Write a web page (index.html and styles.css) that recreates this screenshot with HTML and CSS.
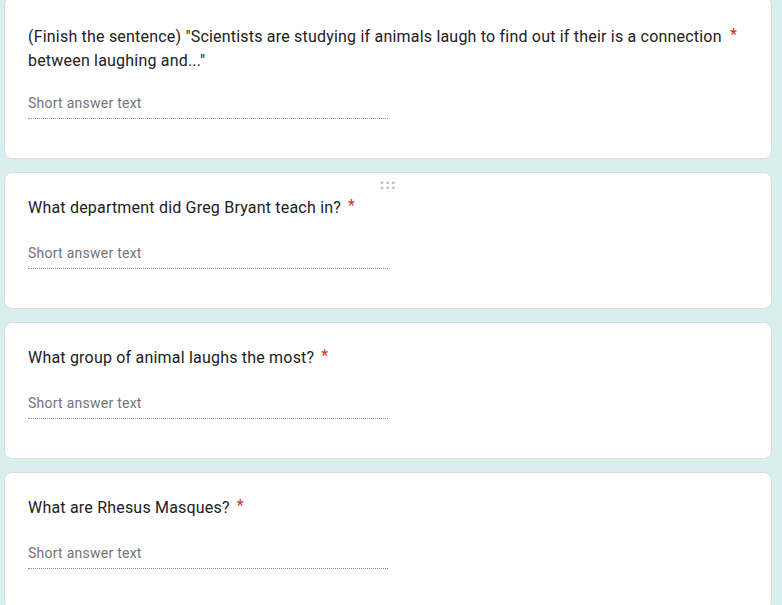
FILE: index.html
```html
<!DOCTYPE html>
<html lang="en">
<head>
<meta charset="utf-8">
<title>Form questions</title>
<link rel="stylesheet" href="styles.css">
</head>
<body>
<main class="form">
  <section class="card first">
    <div class="q-head">
      <div class="q-title">(Finish the sentence) "Scientists are studying if animals laugh to find out if their is a connection between laughing and..."</div>
      <span class="req">*</span>
    </div>
    <div class="answer"><span class="placeholder">Short answer text</span></div>
  </section>

  <section class="card">
    <svg class="drag" width="16" height="9" viewBox="0 0 16 9" aria-hidden="true">
      <circle cx="2" cy="1.8" r="1.4"/><circle cx="7.7" cy="1.8" r="1.4"/><circle cx="13.4" cy="1.8" r="1.4"/>
      <circle cx="2" cy="6.8" r="1.4"/><circle cx="7.7" cy="6.8" r="1.4"/><circle cx="13.4" cy="6.8" r="1.4"/>
    </svg>
    <div class="q-head">
      <div class="q-title">What department did Greg Bryant teach in?</div>
      <span class="req">*</span>
    </div>
    <div class="answer"><span class="placeholder">Short answer text</span></div>
  </section>

  <section class="card">
    <div class="q-head">
      <div class="q-title">What group of animal laughs the most?</div>
      <span class="req">*</span>
    </div>
    <div class="answer"><span class="placeholder">Short answer text</span></div>
  </section>

  <section class="card">
    <div class="q-head">
      <div class="q-title">What are Rhesus Masques?</div>
      <span class="req">*</span>
    </div>
    <div class="answer"><span class="placeholder">Short answer text</span></div>
  </section>
</main>
</body>
</html>
```

FILE: styles.css
```css
html, body {
  margin: 0;
  padding: 0;
}

body {
  background: #d9efed;
  font-family: Roboto, "Liberation Sans", Arial, sans-serif;
  overflow: hidden;
}

.form {
  display: flex;
  flex-direction: column;
  gap: 13px;
  padding: 0 10px 0 4px;
}

.card {
  position: relative;
  background: #fff;
  border: 1px solid #dadce0;
  border-radius: 8px;
  padding: 23px 23px 39px 23px;
}

.card.first {
  margin-top: -3px;
  padding-top: 27px;
}

.card.first .answer {
  margin-top: 20px;
}

.drag {
  position: absolute;
  top: 8px;
  left: 50%;
  transform: translateX(-50%);
  fill: #bdbdbd;
}

.q-head {
  display: flex;
  align-items: flex-start;
  margin-right: 11px;
}

.q-title {
  flex: 0 1 auto;
  font-size: 16px;
  line-height: 24px;
  color: #202124;
  letter-spacing: 0.2px;
}

.req {
  flex: none;
  margin-top: -2px;
  padding-left: 7px;
  font-size: 16px;
  line-height: 24px;
  color: #d93025;
}

.answer {
  margin-top: 23px;
  width: 360px;
  padding-bottom: 5px;
  border-bottom: 1px dotted #8a8d91;
}

.placeholder {
  display: block;
  font-family: Roboto, "Liberation Sans", Arial, sans-serif;
  font-size: 14px;
  line-height: 20px;
  letter-spacing: 0.25px;
  color: #70757a;
}
```
